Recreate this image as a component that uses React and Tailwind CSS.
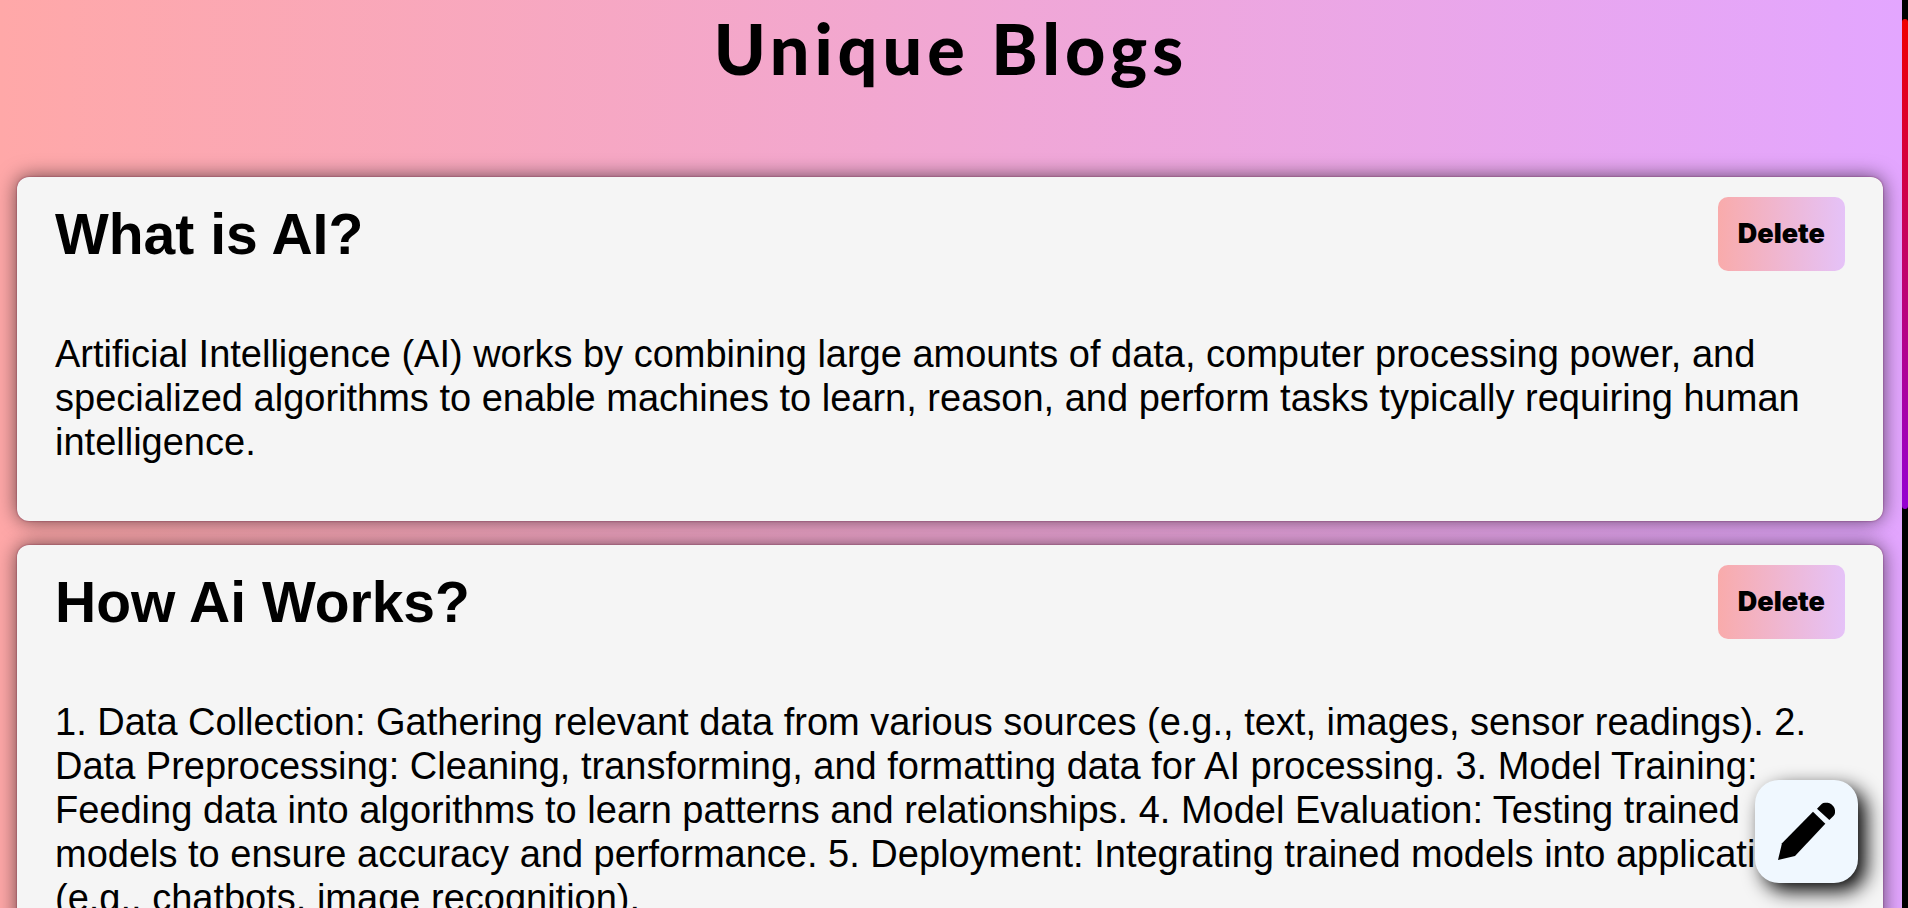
const posts = [
  {
    title: 'What is AI?',
    body: 'Artificial Intelligence (AI) works by combining large amounts of data, computer processing power, and specialized algorithms to enable machines to learn, reason, and perform tasks typically requiring human intelligence.',
  },
  {
    title: 'How Ai Works?',
    body: '1. Data Collection: Gathering relevant data from various sources (e.g., text, images, sensor readings). 2. Data Preprocessing: Cleaning, transforming, and formatting data for AI processing. 3. Model Training: Feeding data into algorithms to learn patterns and relationships. 4. Model Evaluation: Testing trained models to ensure accuracy and performance. 5. Deployment: Integrating trained models into applications (e.g., chatbots, image recognition).',
  },
];

function Pencil() {
  return (
    <svg viewBox="0 0 309 309" className="size-full" fill="currentColor" aria-hidden="true">
      <path d="M186 86 L200 72 Q204 68 210 68 L218 68 Q224 68 229 73 L235 79 Q240 85 240 91 L240 98 Q240 103 236 107 L223 120 Z" />
      <path d="M174 95 L211 131 L120 228 L69 240 L81 190 Z" />
    </svg>
  );
}

function Post({ title, body }) {
  return (
    <article className="rounded-xl bg-[#f5f5f5] px-[38px] pt-5 pb-[57px] shadow-[0_0_20px_rgba(0,0,0,0.6),0_0_2px_rgba(128,0,64,0.6)]">
      <div className="flex items-start justify-between">
        <h2 className="text-[57px] leading-[74px] font-bold">{title}</h2>
        <button
          type="button"
          className="h-[74px] rounded-[10px] bg-linear-to-r/srgb from-[#f9abab] to-[#e5c2f8] px-5 font-['Arial_Black','Inter',sans-serif] text-[27px] font-black"
        >
          Delete
        </button>
      </div>
      <p className="mt-[61px] text-[38px] leading-[44px]">{body}</p>
    </article>
  );
}

export default function App() {
  return (
    <div className="flex h-screen font-['Liberation_Sans',Arial,sans-serif] text-black">
      <main className="min-w-0 flex-1 overflow-y-auto bg-linear-to-r/srgb from-[#ffa8a8] to-[#e3a6ff] [scrollbar-width:none]">
        <h1 className="pb-[81px] text-center font-['Comic_Sans_MS','Lato',sans-serif] text-[70px] leading-[96px] font-black tracking-[5px]">
          Unique Blogs
        </h1>
        <div className="flex flex-col gap-6 pr-[19px] pb-6 pl-[17px]">
          {posts.map((post) => (
            <Post key={post.title} {...post} />
          ))}
        </div>
      </main>
      <div className="w-[6px] bg-black pt-[19px]" aria-hidden="true">
        <div className="h-[490px] rounded-full bg-linear-to-b/srgb from-[#f00000] to-[#9400d3]" />
      </div>
      <button
        type="button"
        aria-label="Write a blog"
        className="fixed right-[50px] bottom-[25px] size-[103px] rounded-3xl bg-[#f0f8ff] shadow-[8px_8px_20px_#000]"
      >
        <Pencil />
      </button>
    </div>
  );
}
